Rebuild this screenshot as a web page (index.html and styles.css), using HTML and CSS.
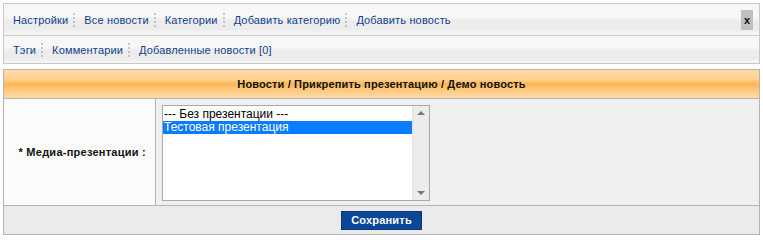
FILE: index.html
```html
<!DOCTYPE html>
<html lang="ru">
<head>
    <meta charset="UTF-8">
    <title>Новости</title>
    <link rel="stylesheet" href="styles.css">
</head>
<body>
    <div class="menu">
        <div class="menu-row">
            <a href="#">Настройки</a>
            <span class="sep"></span>
            <a href="#">Все новости</a>
            <span class="sep"></span>
            <a href="#">Категории</a>
            <span class="sep"></span>
            <a href="#">Добавить категорию</a>
            <span class="sep"></span>
            <a href="#">Добавить новость</a>
            <span class="close">x</span>
        </div>
        <div class="menu-row second">
            <a href="#">Тэги</a>
            <span class="sep"></span>
            <a href="#">Комментарии</a>
            <span class="sep"></span>
            <a href="#">Добавленные новости [0]</a>
        </div>
    </div>

    <form class="panel">
        <div class="panel-title">Новости / Прикрепить презентацию / Демо новость</div>
        <div class="field">
            <div class="field-label">* Медиа-презентации :</div>
            <div class="field-value">
                <div class="listbox">
                    <div class="options">
                        <div class="option">--- Без презентации ---</div>
                        <div class="option selected">Тестовая презентация</div>
                    </div>
                    <div class="scrollbar">
                        <span class="arrow up"></span>
                        <span class="arrow down"></span>
                    </div>
                </div>
            </div>
        </div>
        <div class="actions">
            <button type="submit">Сохранить</button>
        </div>
    </form>
</body>
</html>
```

FILE: styles.css
```css
body {
    margin: 3px;
    font-family: "Liberation Sans", Arial, sans-serif;
    font-size: 11px;
    background-color: #fff;
}
.menu {
    border: 1px solid #c8c8c8;
}
.menu-row {
    display: flex;
    align-items: center;
    height: 31px;
    padding: 0 6px 0 9px;
    background: linear-gradient(to bottom, #f6f6f6 0%, #f8f8f8 40%, #ececec 55%, #ececec 80%, #f7f7f7 100%);
}
.menu-row.second {
    height: 27px;
    border-top: 1px solid #cccccc;
}
.menu-row a {
    color: #123f8c;
    text-decoration: none;
    letter-spacing: 0.15px;
}
.sep {
    width: 2px;
    height: 14px;
    margin: 0 7px 0 5px;
    border-left: 2px dotted #c4c4c4;
}
.close {
    margin-left: auto;
    width: 12px;
    height: 20px;
    line-height: 20px;
    background-color: #c0c0c0;
    text-align: center;
    font-weight: bold;
    font-size: 11px;
    color: #111;
}
.panel {
    margin: 5px 0 0;
    border: 1px solid #b4b4b4;
}
.panel-title {
    height: 28px;
    line-height: 28px;
    text-align: center;
    font-weight: bold;
    letter-spacing: 0.15px;
    color: #111;
    border-bottom: 1px solid #b4b4b4;
    background: linear-gradient(to bottom, #ffdca6 0%, #ffd090 35%, #ffb551 50%, #ffc77a 68%, #ffdba8 100%);
}
.field {
    display: flex;
    border-bottom: 1px solid #b4b4b4;
}
.field-label {
    width: 142px;
    padding-right: 9px;
    display: flex;
    align-items: center;
    justify-content: flex-end;
    font-weight: bold;
    letter-spacing: 0.25px;
    color: #111;
    background-color: #fbfbfb;
    border-right: 1px solid #b4b4b4;
}
.field-value {
    flex: 1;
    padding: 6px 6px 4px;
    background-color: #f0f0f0;
}
.listbox {
    display: flex;
    width: 266px;
    height: 94px;
    border: 1px solid #a9a9a9;
    background-color: #fff;
}
.options {
    flex: 1;
    padding-top: 2px;
}
.option {
    height: 13px;
    line-height: 13px;
    padding-left: 1px;
    font-size: 12px;
    color: #000;
}
.option.selected {
    background-color: #0a7cff;
    color: #fff;
}
.scrollbar {
    width: 16px;
    display: flex;
    flex-direction: column;
    justify-content: space-between;
    align-items: center;
    padding: 5px 0;
    background-color: #ececec;
    border-left: 1px solid #e2e2e2;
}
.arrow {
    width: 0;
    height: 0;
    border-left: 4px solid transparent;
    border-right: 4px solid transparent;
}
.arrow.up {
    border-bottom: 4px solid #777;
}
.arrow.down {
    border-top: 4px solid #777;
}
.actions {
    height: 28px;
    display: flex;
    align-items: center;
    justify-content: center;
    background-color: #ebebeb;
}
.actions button {
    height: 19px;
    padding: 0 9px;
    font-family: inherit;
    font-size: 11px;
    font-weight: bold;
    letter-spacing: 0.2px;
    color: #fff;
    background-color: #0b4797;
    border: 1px dotted #032a66;
    cursor: pointer;
}
```
